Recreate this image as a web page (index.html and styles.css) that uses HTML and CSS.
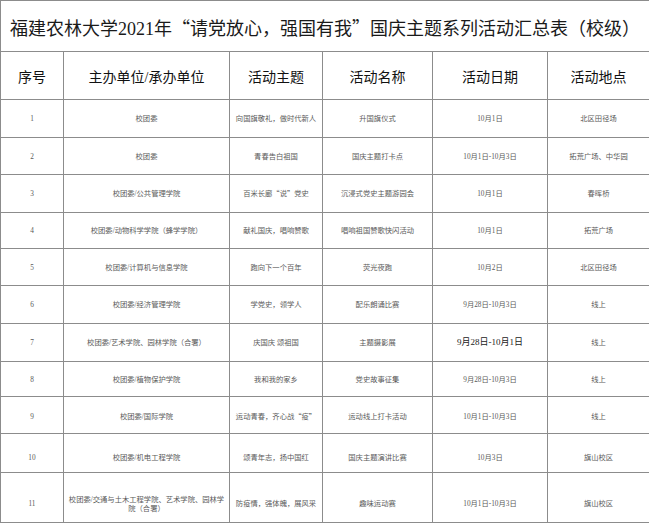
FILE: index.html
```html
<!DOCTYPE html>
<html lang="zh-CN">
<head>
<meta charset="utf-8">
<title>国庆主题系列活动汇总表</title>
<link rel="stylesheet" href="styles.css">
</head>
<body>
<table class="sheet">
  <colgroup>
    <col class="c-no">
    <col class="c-org">
    <col class="c-theme">
    <col class="c-name">
    <col class="c-date">
    <col class="c-place">
  </colgroup>
  <thead>
    <tr class="r-title"><th colspan="6" class="title">福建农林大学2021年<span class="q">“</span>请党放心，强国有我<span class="q">”</span>国庆主题系列活动汇总表（校级）</th></tr>
    <tr class="r-head">
      <th>序号</th><th>主办单位/承办单位</th><th>活动主题</th><th>活动名称</th><th>活动日期</th><th>活动地点</th>
    </tr>
  </thead>
  <tbody>
    <tr class="h38"><td>1</td><td>校团委</td><td>向国旗敬礼，做时代新人</td><td>升国旗仪式</td><td>10月1日</td><td>北区田径场</td></tr>
    <tr class="h37"><td>2</td><td>校团委</td><td>青春告白祖国</td><td>国庆主题打卡点</td><td>10月1日-10月3日</td><td>拓荒广场、中华园</td></tr>
    <tr class="h38"><td>3</td><td>校团委/公共管理学院</td><td>百米长廊<span class="q">“</span>说<span class="q">”</span>党史</td><td>沉浸式党史主题游园会</td><td>10月1日</td><td>春晖桥</td></tr>
    <tr class="h36"><td>4</td><td>校团委/动物科学学院（蜂学学院）</td><td>献礼国庆，唱响赞歌</td><td>唱响祖国赞歌快闪活动</td><td>10月1日</td><td>拓荒广场</td></tr>
    <tr class="h37"><td>5</td><td>校团委/计算机与信息学院</td><td>跑向下一个百年</td><td>荧光夜跑</td><td>10月2日</td><td>北区田径场</td></tr>
    <tr class="h38"><td>6</td><td>校团委/经济管理学院</td><td>学党史，领学人</td><td>配乐朗诵比赛</td><td>9月28日-10月3日</td><td>线上</td></tr>
    <tr class="h38"><td>7</td><td>校团委/艺术学院、园林学院（合署）</td><td>庆国庆 颂祖国</td><td>主题摄影展</td><td class="big">9月28日-10月1日</td><td>线上</td></tr>
    <tr class="h35"><td>8</td><td>校团委/植物保护学院</td><td>我和我的家乡</td><td>党史故事征集</td><td>9月28日-10月3日</td><td>线上</td></tr>
    <tr class="h37 low1"><td>9</td><td>校团委/国际学院</td><td>运动青春，齐心战<span class="q">“</span>疫<span class="q">”</span></td><td>运动线上打卡活动</td><td>10月1日-10月3日</td><td>线上</td></tr>
    <tr class="h39 low2"><td>10</td><td>校团委/机电工程学院</td><td>颂青年志，扬中国红</td><td>国庆主题演讲比赛</td><td>10月3日</td><td>旗山校区</td></tr>
    <tr class="h50 low3"><td>11</td><td>校团委/交通与土木工程学院、艺术学院、园林学<br>院（合署）</td><td>防疫情，强体魄，展风采</td><td>趣味运动赛</td><td>10月1日-10月3日</td><td>旗山校区</td></tr>
  </tbody>
</table>
</body>
</html>
```

FILE: styles.css
```css
html, body {
  margin: 0;
  padding: 0;
  background: #ffffff;
}

body {
  font-family: "Liberation Serif", "Noto Sans CJK SC", serif;
  color: #111;
}

.sheet {
  width: 649px;
  table-layout: fixed;
  border-collapse: collapse;
}

.c-no { width: 63px; }
.c-org { width: 166px; }
.c-theme { width: 93px; }
.c-name { width: 110px; }
.c-date { width: 115px; }
.c-place { width: 102px; }

.sheet th,
.sheet td {
  border: 1px solid #8c8c8c;
  padding: 0;
  text-align: center;
  vertical-align: middle;
}

.sheet th {
  font-weight: normal;
  color: #111;
  font-size: 14px;
}

.q {
  font-family: "Noto Sans CJK SC", sans-serif;
}

.r-title { height: 51px; }
.r-head { height: 48px; }

.sheet th.title {
  font-size: 18px;
  white-space: nowrap;
  padding-top: 2px;
  color: #1a1a1a;
}

.sheet td {
  font-size: 7.3px;
  line-height: 9px;
  color: #5a5a5a;
  white-space: nowrap;
}

.sheet td.big {
  font-size: 9px;
  color: #222;
}

.h35 { height: 35px; }
.h36 { height: 36px; }
.h37 { height: 37px; }
.h38 { height: 38px; }
.h39 { height: 39px; }
.h50 { height: 50px; }

.low1 td { padding-top: 3px; }
.low2 td { padding-top: 9px; }
.low3 td { padding-top: 12px; }
```
